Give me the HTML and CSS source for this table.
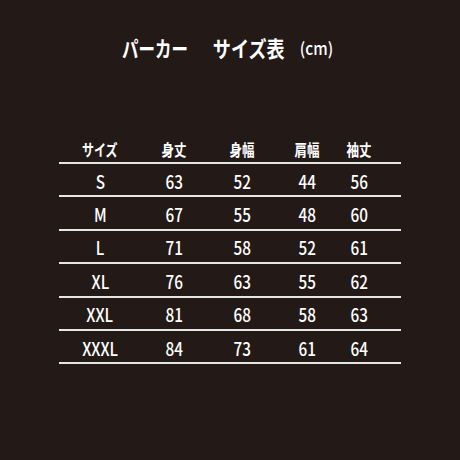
FILE: index.html
```html
<!DOCTYPE html>
<html lang="ja">
<head>
<meta charset="utf-8">
<link rel="stylesheet" href="styles.css">
</head>
<body>
<div class="page">
  <div class="title">
    <div class="tpart t1"><span class="sq sq-t1">パーカー</span></div>
    <div class="tpart t2"><span class="sq sq-t2">サイズ表</span></div>
    <div class="tpart t3"><span class="sq sq-t3">(cm)</span></div>
  </div>
  <div class="table">
    <div class="row head">
      <div class="cell"><span class="sq sq-h1">サイズ</span></div>
      <div class="cell"><span class="sq sq-h">身丈</span></div>
      <div class="cell"><span class="sq sq-h">身幅</span></div>
      <div class="cell"><span class="sq sq-h">肩幅</span></div>
      <div class="cell"><span class="sq sq-h">袖丈</span></div>
    </div>
    <div class="row">
      <div class="cell"><span class="sq sq-d">S</span></div>
      <div class="cell"><span class="sq sq-d">63</span></div>
      <div class="cell"><span class="sq sq-d">52</span></div>
      <div class="cell"><span class="sq sq-d">44</span></div>
      <div class="cell"><span class="sq sq-d">56</span></div>
    </div>
    <div class="row">
      <div class="cell"><span class="sq sq-d">M</span></div>
      <div class="cell"><span class="sq sq-d">67</span></div>
      <div class="cell"><span class="sq sq-d">55</span></div>
      <div class="cell"><span class="sq sq-d">48</span></div>
      <div class="cell"><span class="sq sq-d">60</span></div>
    </div>
    <div class="row">
      <div class="cell"><span class="sq sq-d">L</span></div>
      <div class="cell"><span class="sq sq-d">71</span></div>
      <div class="cell"><span class="sq sq-d">58</span></div>
      <div class="cell"><span class="sq sq-d">52</span></div>
      <div class="cell"><span class="sq sq-d">61</span></div>
    </div>
    <div class="row">
      <div class="cell"><span class="sq sq-d">XL</span></div>
      <div class="cell"><span class="sq sq-d">76</span></div>
      <div class="cell"><span class="sq sq-d">63</span></div>
      <div class="cell"><span class="sq sq-d">55</span></div>
      <div class="cell"><span class="sq sq-d">62</span></div>
    </div>
    <div class="row">
      <div class="cell"><span class="sq sq-d">XXL</span></div>
      <div class="cell"><span class="sq sq-d">81</span></div>
      <div class="cell"><span class="sq sq-d">68</span></div>
      <div class="cell"><span class="sq sq-d">58</span></div>
      <div class="cell"><span class="sq sq-d">63</span></div>
    </div>
    <div class="row">
      <div class="cell"><span class="sq sq-d">XXXL</span></div>
      <div class="cell"><span class="sq sq-d">84</span></div>
      <div class="cell"><span class="sq sq-d">73</span></div>
      <div class="cell"><span class="sq sq-d">61</span></div>
      <div class="cell"><span class="sq sq-d">64</span></div>
    </div>
  </div>
</div>
</body>
</html>
```
FILE: styles.css
```css
html, body {
  margin: 0;
  padding: 0;
  background: #231a17;
}
body {
  width: 460px;
  height: 460px;
  overflow: hidden;
  color: #ffffff;
  font-family: "Noto Sans CJK JP", "Noto Sans", sans-serif;
  font-weight: 700;
}
.page {
  padding-top: 33px;
}
.title {
  display: flex;
  align-items: center;
  height: 28px;
  padding-left: 122px;
}
.tpart {
  display: flex;
  justify-content: center;
  align-items: center;
  height: 28px;
  white-space: nowrap;
  line-height: 1;
}
.t1 { width: 66px; font-size: 22px; }
.t2 { width: 72px; margin-left: 25px; font-size: 22px; }
.t3 { width: 33px; margin-left: 15px; font-size: 17px; font-weight: 500; }
.sq {
  display: inline-block;
  white-space: nowrap;
  transform-origin: center center;
}
.sq-t1 { transform: scaleX(0.75); }
.sq-t2 { transform: scaleX(0.82); }
.sq-t3 { transform: scaleX(0.9); }

.table {
  margin: 71px 0 0 59px;
  width: 342px;
}
.row {
  display: grid;
  grid-template-columns: 82px 66px 70px 60px 44px;
  padding-right: 20px;
  height: 31.4px;
  border-bottom: 2px solid #e6e6e6;
  align-items: center;
  line-height: 1;
}
.row.head {
  height: 30px;
}
.cell {
  display: flex;
  justify-content: center;
  align-items: center;
  white-space: nowrap;
}
.head .cell { font-size: 16px; padding-top: 4px; }
.sq-h1 { transform: scaleX(0.75); }
.sq-h { transform: scaleX(0.78); }
.row:not(.head) .cell { font-size: 18px; font-weight: 500; padding-top: 2px; }
.sq-d { transform: scaleX(0.85); }
```
